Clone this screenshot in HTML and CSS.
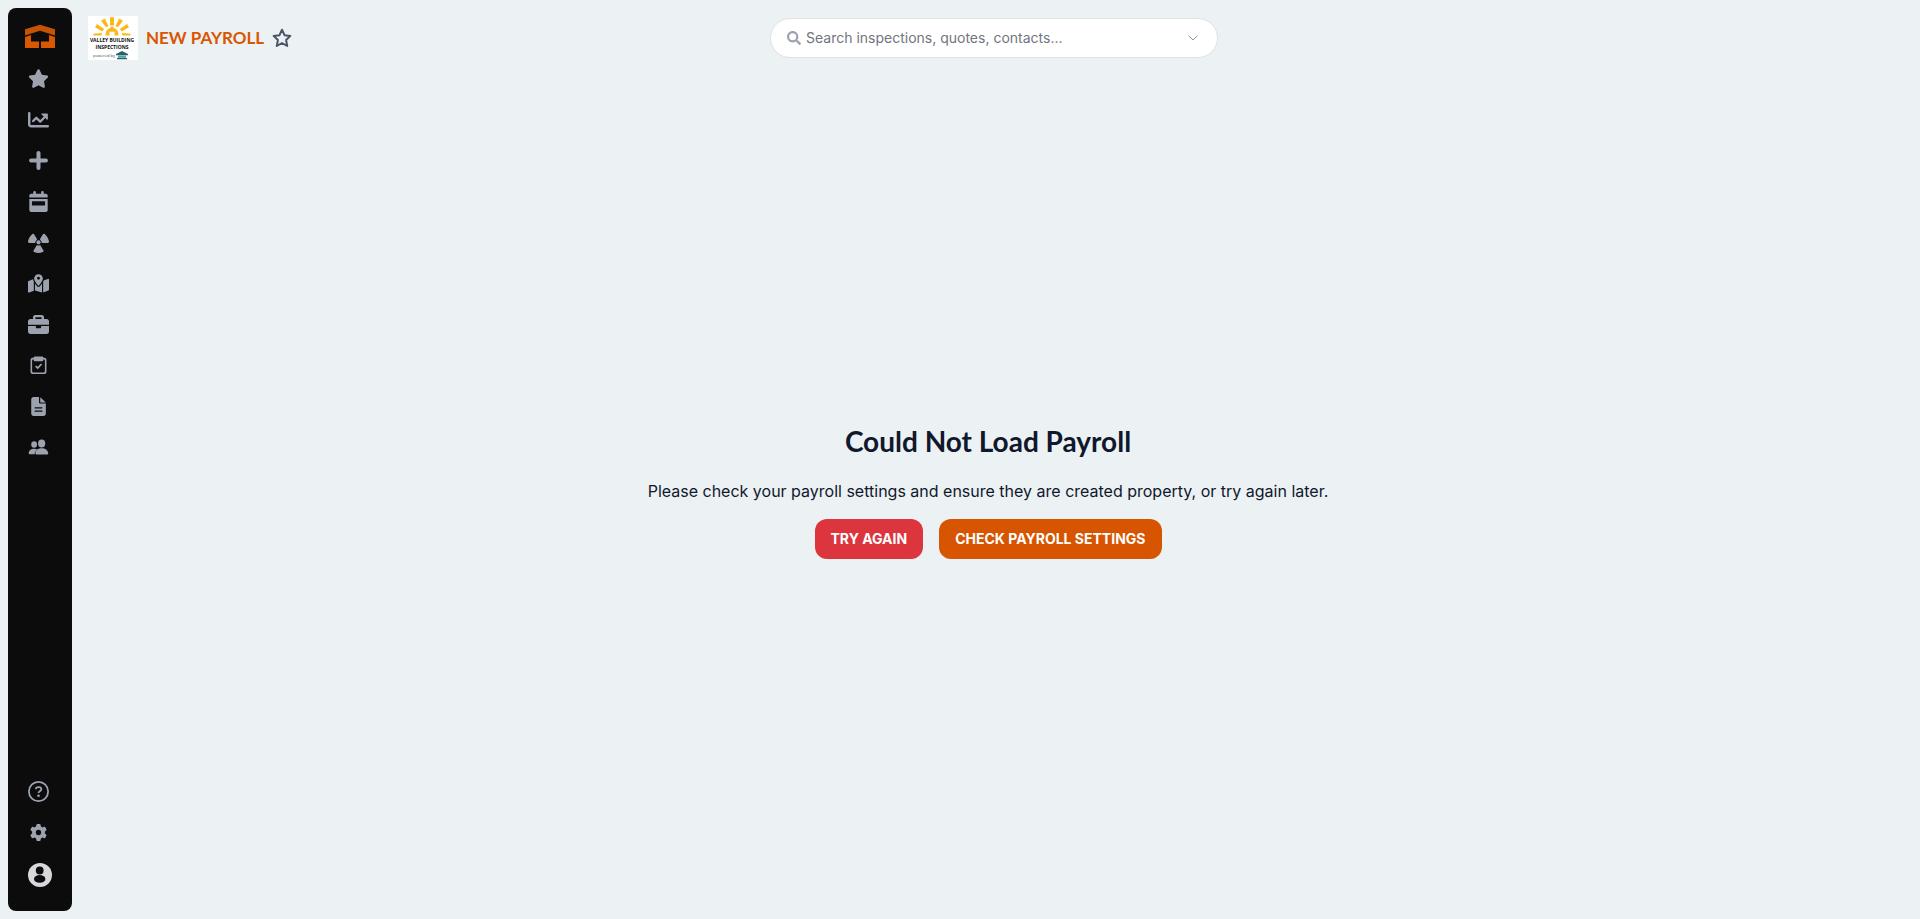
FILE: index.html
```html
<!DOCTYPE html>
<html lang="en">
<head>
<meta charset="utf-8">
<meta name="viewport" content="width=device-width, initial-scale=1">
<title>New Payroll</title>
<link rel="stylesheet" href="styles.css">
</head>
<body>
<div class="app">
  <aside class="sidebar">
    <a class="brand" href="#" aria-label="Home">
      <svg viewBox="0 0 30 24" width="30" height="24">
        <path fill="#c65204" d="M0 5.200 15 .7l15 4.500v6.300L15 6.800 0 11.500z"/>
        <path fill="#d95700" d="M0 13l6-2v6.500h8V24H0zM30 13l-6-2v6.500h-8V24h14z"/>
      </svg>
    </a>
    <nav class="nav" aria-label="Main">
      <a class="nav-link" href="#" aria-label="Favorites"><svg viewBox="0 0 576 512" class="icon-md"><path d="M316.900 18C311.600 7 300.400 0 288.100 0s-23.400 7-28.800 18L195 150.300 51.400 171.500c-12 1.800-22 10.200-25.700 21.700s-.7 24.200 7.900 32.700L137.800 329 113.200 474.700c-2 12 3 24.200 12.900 31.300s23 8 33.800 2.300l128.300-68.500 128.300 68.500c10.800 5.700 23.900 4.900 33.800-2.300s14.900-19.300 12.900-31.300L438.500 329 542.700 225.900c8.600-8.500 11.700-21.200 7.900-32.700s-13.700-19.900-25.700-21.700L381.200 150.300 316.900 18z"/></svg></a>
      <a class="nav-link" href="#" aria-label="Reports"><svg viewBox="0 0 24 24" class="icon-lg"><path d="M1.400 3.500c.8 0 1.400.6 1.400 1.400v12.700c0 .5.300.8.800.8h19c.8 0 1.400.6 1.400 1.400s-.6 1.400-1.400 1.400H3.400C1.500 21.200 0 19.700 0 17.800V4.900c0-.8.600-1.400 1.400-1.400z"/><path d="M16 5h5.900c.5 0 .8.300.8.800v5.700c0 .7-.8 1-1.300.5l-1.600-1.600-4.900 5c-.5.500-1.300.5-1.800 0L9.500 11.900 6.800 14.700c-1.200 1.200-3-.6-1.900-1.800l3.700-3.800c.5-.5 1.300-.5 1.800 0l3.600 3.500 4-4.100-2.500-2.200C15 5.800 15.300 5 16 5z"/></svg></a>
      <a class="nav-link" href="#" aria-label="Create"><svg viewBox="0 0 24 24" class="icon-lg"><path d="M12 1.200c1.300 0 2.300 1 2.300 2.300v6.200h6.200a2.300 2.300 0 0 1 0 4.600h-6.200v6.200a2.300 2.300 0 0 1-4.600 0v-6.200H3.500a2.300 2.300 0 0 1 0-4.600h6.200V3.500c0-1.300 1-2.300 2.300-2.300z"/></svg></a>
      <a class="nav-link" href="#" aria-label="Calendar"><svg viewBox="0 0 24 24" class="icon-lg"><path fill-rule="evenodd" d="M7.500 0C8.300 0 9 .7 9 1.500V3h6V1.500a1.500 1.500 0 0 1 3 0V3h2.300c1.200 0 2.200 1 2.200 2.200v2.300h-21V5.200C1.500 4 2.500 3 3.700 3H6V1.500C6 .7 6.700 0 7.500 0zM1.500 9h21v12.700c0 1.300-1 2.300-2.200 2.300H3.700c-1.200 0-2.200-1-2.200-2.300zM5.200 11.800c-.4 0-.7.300-.7.700v3.400c0 .4.300.7.700.7h13.600c.4 0 .7-.3.700-.7v-3.400c0-.4-.3-.7-.7-.7z"/></svg></a>
      <a class="nav-link" href="#" aria-label="Radon"><svg viewBox="0 0 24 24" class="icon-lg"><path d="M4.800 2.500c.6-.7 1.700-.6 2.200.2L10.200 8c.2.400.1.700-.2 1-.9.700-1.500 1.700-1.700 2.900-.1.400-.4.600-.8.600H1.300C.5 12.500-.1 11.700 0 10.900c.5-3.400 2.300-6.400 4.800-8.400zM19.200 2.500c-.6-.7-1.700-.6-2.200.2L13.800 8c-.2.400-.1.700.2 1 .9.700 1.500 1.700 1.700 2.900.1.400.4.600.8.600h6.200c.8 0 1.400-.8 1.300-1.600-.5-3.400-2.300-6.400-4.800-8.400zM6.500 20.800c-.5.800-.2 1.700.6 2.100 3.100 1.400 6.700 1.400 9.800 0 .8-.4 1.100-1.300.6-2.100l-3.300-5.300c-.2-.3-.6-.4-.9-.3-.8.300-1.800.3-2.600 0-.3-.1-.7 0-.9.300z"/><circle cx="12" cy="11.800" r="2.400"/></svg></a>
      <a class="nav-link" href="#" aria-label="Map"><svg viewBox="0 0 576 512" class="icon-lg"><path d="M408 120c0 54.600-73.100 151.900-105.200 192-7.700 9.600-22 9.600-29.600 0C241.100 271.900 168 174.600 168 120 168 53.700 221.700 0 288 0s120 53.700 120 120zm8 80.400c3.500-6.900 6.700-13.800 9.600-20.600.5-1.200 1-2.500 1.500-3.700l116-46.400C558.900 123.400 576 135 576 152v270.800c0 9.800-6 18.600-15.100 22.300L416 503V200.400zM137.600 138.300c2.400 14.100 7.200 28.300 12.800 41.500 2.900 6.800 6.100 13.700 9.600 20.600v251.400L32.900 502.700C17.100 509 0 497.400 0 480.400V209.600c0-9.800 6-18.600 15.100-22.300l122.500-49zM327.800 332c13.900-17.400 35.700-45.700 56.200-77v249.300l-192-54.900V255c20.500 31.300 42.300 59.600 56.200 77 20.500 25.600 59.100 25.600 79.600 0zM288 152a40 40 0 1 0 0-80 40 40 0 1 0 0 80z"/></svg></a>
      <a class="nav-link" href="#" aria-label="Jobs"><svg viewBox="0 0 24 24" class="icon-lg"><path fill-rule="evenodd" d="M8.200 1.200h7.600c1.400 0 2.500 1.100 2.500 2.500v2.100h3c1.500 0 2.700 1.200 2.700 2.700v3.900H0V8.500c0-1.500 1.200-2.700 2.700-2.700h3V3.700c0-1.400 1.100-2.500 2.500-2.500zm.3 2.500v2.100h7V3.700zM0 13.700h9v1.700c0 .5.400.9.900.9h4.200c.5 0 .9-.4.900-.9v-1.700h9v6.400c0 1.500-1.200 2.700-2.700 2.700H2.700C1.200 22.800 0 21.600 0 20.100z"/></svg></a>
      <a class="nav-link" href="#" aria-label="Tasks"><svg viewBox="0 0 24 24" class="icon-lg"><path fill-rule="evenodd" d="M8 1.800h8c.8 0 1.400.5 1.600 1.200h1.200c1.300 0 2.300 1 2.300 2.300v14.200c0 1.300-1 2.300-2.300 2.300H5.200c-1.300 0-2.300-1-2.300-2.300V5.300C2.900 4 3.900 3 5.200 3h1.200c.2-.7.800-1.200 1.600-1.200zM6 5c-.8 0-1.300.4-1.300 1.200v12.500c0 .8.500 1.300 1.300 1.300h12c.8 0 1.300-.5 1.300-1.300V6.200C19.300 5.400 18.800 5 18 5h-.4v.8c0 .8-.7 1.400-1.500 1.400H7.900c-.8 0-1.500-.6-1.500-1.400V5z"/><path class="tick" d="m8.700 12.700 2.400 2.300 4.400-4.700"/></svg></a>
      <a class="nav-link" href="#" aria-label="Documents"><svg viewBox="0 0 24 24" class="icon-lg"><path fill-rule="evenodd" d="M6.300 1.200h6.300v6c0 .8.600 1.400 1.400 1.400h6.400v11.600c0 1.400-1.200 2.600-2.600 2.600H6.300c-1.400 0-2.600-1.200-2.600-2.600V3.800c0-1.400 1.200-2.600 2.600-2.600zm1.900 11.600a.7.700 0 0 0 0 1.500h7.700a.7.700 0 0 0 0-1.500zm0 3.800a.7.700 0 0 0 0 1.500h7.700a.7.700 0 0 0 0-1.500z"/><path d="M14 1.300 20.400 7.400H14z"/></svg></a>
      <a class="nav-link" href="#" aria-label="Contacts"><svg viewBox="0 -1 24 24" class="icon-lg"><ellipse cx="7" cy="7.500" rx="3.300" ry="3.700"/><path d="M.8 17.800c0-3.300 2.700-5.400 6.200-5.400 1.400 0 2.700.3 3.700.9-1.800 1.100-3 2.900-3.100 5.300H1.700c-.5 0-.9-.3-.9-.8z"/><ellipse cx="15.600" cy="6.500" rx="4.100" ry="4.600"/><path d="M8.400 17.600c.2-3.500 3.300-5.700 7.200-5.700s7.200 2.200 7.500 5.600c.1.800-.5 1.400-1.300 1.400H9.600c-.7 0-1.300-.6-1.200-1.300z"/></svg></a>
    </nav>
    <nav class="nav nav-bottom" aria-label="Account">
      <a class="nav-link" href="#" aria-label="Help"><svg viewBox="0 0 24 24" class="icon-lg"><circle class="ring" cx="12" cy="12" r="11"/><path class="question" d="M8.900 9.200c.2-1.500 1.200-2.300 2.700-2.300h.9c1.500 0 2.700 1 2.700 2.500 0 2.200-3.200 2.300-3.200 4.300"/><circle cx="12" cy="16.900" r="1.500"/></svg></a>
      <a class="nav-link" href="#" aria-label="Settings"><svg viewBox="0 0 512 512" class="icon-sm"><path d="M495.900 166.600c3.200 8.700.5 18.400-6.400 24.600l-43.300 39.400c1.100 8.300 1.700 16.800 1.700 25.400s-.6 17.100-1.700 25.400l43.300 39.400c6.900 6.200 9.600 15.900 6.400 24.600-4.400 11.900-9.700 23.300-15.800 34.300l-4.700 8.100c-6.600 11-14 21.400-22.100 31.200-5.900 7.200-15.700 9.600-24.500 6.800l-55.700-17.700c-13.400 10.300-28.200 18.900-44 25.400l-12.500 57.100c-2 9.100-9 16.300-18.200 17.800-13.800 2.300-28 3.500-42.500 3.500s-28.700-1.200-42.500-3.500c-9.200-1.500-16.200-8.700-18.200-17.800l-12.500-57.100c-15.800-6.500-30.600-15.100-44-25.400l-55.600 17.800c-8.800 2.800-18.600.3-24.500-6.800-8.100-9.800-15.500-20.200-22.100-31.200l-4.700-8.100c-6.100-11-11.400-22.400-15.800-34.300-3.200-8.700-.5-18.400 6.400-24.600l43.300-39.400C64.600 273.100 64 264.600 64 256s.6-17.100 1.700-25.400L22.400 191.200c-6.900-6.200-9.600-15.900-6.400-24.600 4.400-11.900 9.700-23.300 15.800-34.300l4.700-8.100c6.600-11 14-21.400 22.100-31.200 5.900-7.200 15.700-9.600 24.500-6.800l55.700 17.700c13.400-10.300 28.200-18.900 44-25.400l12.500-57.100c2-9.100 9-16.300 18.200-17.800C227.300 1.200 241.500 0 256 0s28.700 1.200 42.500 3.500c9.200 1.500 16.200 8.700 18.200 17.800l12.500 57.100c15.800 6.500 30.600 15.100 44 25.400l55.700-17.700c8.800-2.800 18.600-.3 24.500 6.800 8.100 9.800 15.500 20.200 22.100 31.200l4.700 8.100c6.100 11 11.400 22.400 15.800 34.300zM256 336a80 80 0 1 0 0-160 80 80 0 1 0 0 160z"/></svg></a>
      <a class="nav-link profile" href="#" aria-label="Profile"><svg viewBox="0 0 24 24" width="24" height="24"><circle cx="12" cy="12" r="12" fill="#d8d8dc"/><circle cx="11.700" cy="7.500" r="3.900" fill="#0c0c0c"/><ellipse cx="11.700" cy="15.900" rx="5.700" ry="3.900" fill="#0c0c0c"/></svg></a>
    </nav>
  </aside>

  <div class="page">
    <header class="topbar">
      <div class="title-group">
        <svg class="company-logo" viewBox="0 0 50 44" role="img" aria-label="Valley Building Inspections">
          <path fill="#fff" d="M0 0h50v44H0z"/>
          <g fill="#fbb917">
            <path d="M5.500 19.500v-1.700l8.500-.9-.5 2.600zM42.500 19.500v-1.700l-8.500-.9.500 2.600zM7 11.200l2-3.200 7.200 5-1.800 2.600zM41 11.200l-2-3.200-7.200 5 1.800 2.600zM13 4.700l3.800-2.100 3.700 7.300-2.300 1.400zM35 4.700l-3.800-2.100-3.700 7.300 2.300 1.400zM22 1.200h4v8.300h-4z"/>
            <path d="M17.500 19.500c0-2 .4-3.900 1.300-5.300L24 10.300l5.200 3.900c.9 1.400 1.300 3.300 1.300 5.300h-4v-3.700h-5v3.700z"/>
          </g>
          <text class="logo-name" x="24" y="26" text-anchor="middle">VALLEY BUILDING</text>
          <text class="logo-name" x="24" y="33" text-anchor="middle">INSPECTIONS</text>
          <text class="logo-note" x="5" y="41">powered by</text>
          <path fill="#285f78" d="M28 38l6-3 6 3v1.300H28zM29 42h10v1.300H29z"/><path fill="#48a78c" d="M30 39.500h8v2.300h-8z"/>
        </svg>
        <h1 class="page-title">NEW PAYROLL</h1>
        <button class="favorite" type="button" aria-label="Add to favorites"><svg viewBox="0 0 20 20" width="20" height="20"><path d="M10 1.700l2.500 5.500 5.900.7-4.300 4.100 1.100 6L10 15l-5.200 3 1.100-6-4.300-4.100 5.900-.7z"/></svg></button>
      </div>
      <label class="search">
        <svg class="search-icon" viewBox="0 0 512 512" width="14" height="14"><path d="M505 442.700 405.300 343c-4.500-4.500-10.600-7-17-7H372c27.600-35.300 44-79.700 44-128C416 93.100 322.900 0 208 0S0 93.100 0 208s93.100 208 208 208c48.300 0 92.700-16.400 128-44v16.300c0 6.400 2.500 12.500 7 17l99.700 99.700c9.400 9.400 24.600 9.400 33.900 0l28.300-28.300c9.400-9.400 9.400-24.600.1-34zM208 336a128 128 0 1 1 0-256 128 128 0 1 1 0 256z"/></svg>
        <input class="search-input" type="text" aria-label="Search" placeholder="Search inspections, quotes, contacts...">
        <svg class="chevron" viewBox="0 0 10 6" width="10" height="6"><path d="M.5 .5 5 5 9.500 .5"/></svg>
      </label>
    </header>

    <main class="message">
      <h2 class="message-title">Could Not Load Payroll</h2>
      <p class="message-text">Please check your payroll settings and ensure they are created property, or try again later.</p>
      <div class="actions">
        <button class="button button-danger" type="button">TRY AGAIN</button>
        <button class="button button-primary" type="button">CHECK PAYROLL SETTINGS</button>
      </div>
    </main>
  </div>
</div>
</body>
</html>
```
FILE: styles.css
```css
* { box-sizing: border-box; }

body {
  margin: 0;
  background: #ecf1f4;
  color: #10182c;
  font-family: Inter, "Liberation Sans", sans-serif;
  font-size: 16px;
  line-height: 24px;
}

h1, h2, p { margin: 0; }
button, input { font: inherit; }
svg { display: block; flex: none; }

.app { display: flex; min-height: 100vh; padding: 8px 0 8px 8px; }

.sidebar {
  display: flex;
  flex-direction: column;
  width: 64px;
  padding: 16px 0 14px;
  border-radius: 8px;
  background: #0c0c0c;
}

.brand { display: flex; justify-content: center; padding-bottom: 10px; }
.nav { display: flex; flex-direction: column; }
.nav-bottom { margin-top: auto; }

.nav-link {
  display: flex;
  align-items: center;
  justify-content: center;
  width: 61px;
  height: 41px;
  color: #9ca3af;
  fill: currentColor;
}

.icon-lg { width: 21px; height: 21px; }
.icon-md { width: 21px; height: 19px; }
.icon-sm { width: 17px; height: 17px; }
.profile { width: 64px; height: 44px; }

.tick, .question, .ring { fill: none; stroke: currentColor; stroke-width: 2; }

.page { display: flex; flex: 1; flex-direction: column; min-width: 0; }

.topbar {
  display: grid;
  grid-template-columns: 1fr minmax(0, 448px) 1fr;
  align-items: center;
  padding: 8px 20px 8px 16px;
}

.title-group { display: flex; align-items: center; gap: 8px; }
.company-logo { width: 50px; height: 44px; }
.logo-name { font: bold 5px "Open Sans", sans-serif; fill: #111; }
.logo-note { font: 4px "Open Sans", sans-serif; fill: #444; }

.page-title {
  color: #d95700;
  font: bold 17px/24px Lato, sans-serif;
  white-space: nowrap;
}

.favorite {
  padding: 0;
  border: 0;
  background: none;
  fill: none;
  stroke: #4b5568;
  stroke-width: 2;
  stroke-linejoin: round;
}

.search {
  display: flex;
  align-items: center;
  gap: 5px;
  height: 40px;
  padding: 0 19px 0 16px;
  border: 1px solid #dfe1e5;
  border-radius: 20px;
  background: #fff;
}

.search-icon { fill: #9ca3af; }

.search-input {
  flex: 1;
  min-width: 0;
  padding: 0;
  border: 0;
  outline: 0;
  background: none;
  color: #10182c;
  font-size: 14px;
}

.search-input::placeholder { color: #71757e; opacity: 1; }
.chevron { fill: none; stroke: #8d929b; stroke-width: 1; }

.message {
  display: flex;
  flex: 1;
  flex-direction: column;
  align-items: center;
  justify-content: center;
  gap: 16px;
  padding-right: 16px;
  text-align: center;
}

.message-title { padding-bottom: 2px; font: bold 28px/40px Lato, sans-serif; }
.actions { display: flex; flex-wrap: wrap; justify-content: center; gap: 16px; }

.button {
  height: 40px;
  padding: 0 16px;
  border: 0;
  border-radius: 12px;
  color: #fff;
  font-size: 14px;
  font-weight: 700;
}

.button-danger { background: #dd353d; }
.button-primary { background: #d75500; }
```
